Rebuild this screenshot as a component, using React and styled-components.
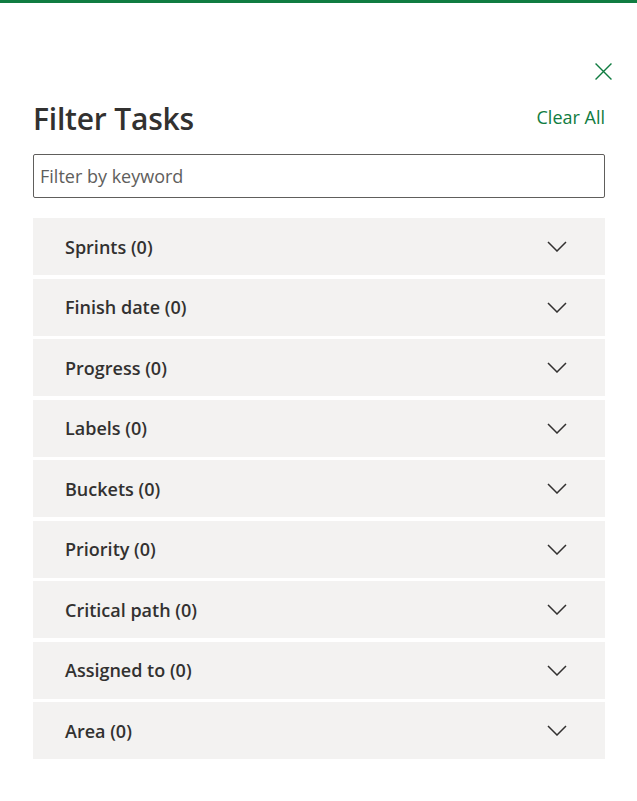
import React from 'react';
import styled, {createGlobalStyle} from 'styled-components';

const GlobalStyle = createGlobalStyle`
  html, body {
    margin: 0;
    padding: 0;
    background: #fff;
  }
  body {
    font-family: "Open Sans", "Noto Sans", "Liberation Sans", sans-serif;
    color: #323130;
  }
`;

const TopBar = styled.div`
  height: 3px;
  background: #107c41;
`;

const Panel = styled.div`
  padding: 0 32px 0 33px;
  display: flex;
  flex-direction: column;
`;

const CloseRow = styled.div`
  display: flex;
  justify-content: flex-end;
  padding-top: 57px;
`;

const CloseButton = styled.button`
  width: 22px;
  height: 22px;
  padding: 0;
  margin-right: -9px;
  border: none;
  background: transparent;
  display: flex;
  align-items: center;
  justify-content: center;
  cursor: pointer;
  svg {
    width: 17px;
    height: 17px;
  }
`;

const Header = styled.div`
  display: flex;
  justify-content: space-between;
  align-items: baseline;
  margin-top: 17px;
`;

const Title = styled.h1`
  margin: 0;
  font-size: 30px;
  font-weight: 600;
  line-height: 40px;
  color: #323130;
  letter-spacing: -0.2px;
`;

const ClearAll = styled.button`
  border: none;
  background: transparent;
  padding: 0;
  font-family: inherit;
  font-size: 18px;
  color: #107c41;
  cursor: pointer;
  position: relative;
  top: -6px;
`;

const Search = styled.input`
  margin-top: 15px;
  height: 44px;
  box-sizing: border-box;
  border: 1px solid #605e5c;
  border-radius: 2px;
  padding: 0 6px;
  font-family: inherit;
  font-size: 18px;
  color: #323130;
  outline: none;
  &::placeholder {
    color: #605e5c;
  }
`;

const List = styled.div`
  margin-top: 20px;
  display: flex;
  flex-direction: column;
  gap: 3.5px;
`;

const Row = styled.div`
  height: 57px;
  background: #f3f2f1;
  display: flex;
  align-items: center;
  justify-content: space-between;
  padding: 0 38px 0 32px;
  cursor: pointer;
`;

const Label = styled.span`
  font-size: 18px;
  font-weight: 600;
  color: #323130;
`;

const Chevron = styled.svg`
  width: 20px;
  height: 11px;
`;

const filters = [
  'Sprints', 'Finish date', 'Progress', 'Labels', 'Buckets',
  'Priority', 'Critical path', 'Assigned to', 'Area',
];

const App = () => {
  return (
    <>
      <GlobalStyle/>
      <TopBar/>
      <Panel>
        <CloseRow>
          <CloseButton aria-label="Close">
            <svg viewBox="0 0 16 16" fill="none" stroke="#107c41" strokeWidth="1.3">
              <path d="M0.5 0.5 L15.5 15.5 M15.5 0.5 L0.5 15.5"/>
            </svg>
          </CloseButton>
        </CloseRow>
        <Header>
          <Title>Filter Tasks</Title>
          <ClearAll>Clear All</ClearAll>
        </Header>
        <Search placeholder="Filter by keyword"/>
        <List>
          {filters.map(name => (
            <Row key={name}>
              <Label>{name} (0)</Label>
              <Chevron viewBox="0 0 20 11" fill="none" stroke="#323130" strokeWidth="1.5">
                <path d="M1 1 L10 10 L19 1"/>
              </Chevron>
            </Row>
          ))}
        </List>
      </Panel>
    </>
  );
};

export default App;
